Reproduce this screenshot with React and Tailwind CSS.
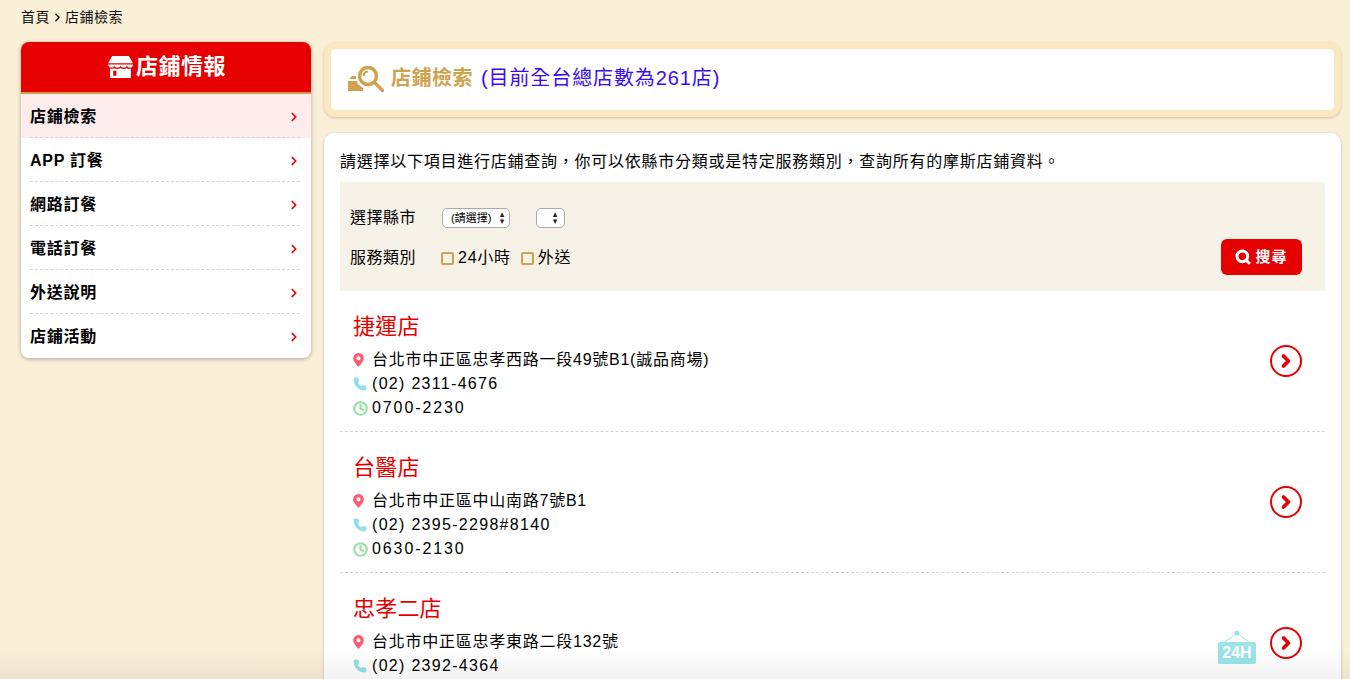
import React from 'react';
import { ChevronRight, Phone, Clock, Search } from 'lucide-react';

const menuItems = ['店鋪檢索', 'APP 訂餐', '網路訂餐', '電話訂餐', '外送說明', '店鋪活動'];

const intro = '請選擇以下項目進行店鋪查詢\uFF0C你可以依縣市分類或是特定服務類別\uFF0C查詢所有的摩斯店鋪資料。';

// third store's hours sit below the fold in the screenshot
const stores = [
  { name: '捷運店', addr: '台北市中正區忠孝西路一段49號B1(誠品商場)', tel: '(02) 2311-4676', time: '0700-2230' },
  { name: '台醫店', addr: '台北市中正區中山南路7號B1', tel: '(02) 2395-2298#8140', time: '0630-2130' },
  { name: '忠孝二店', addr: '台北市中正區忠孝東路二段132號', tel: '(02) 2392-4364', open24: true },
];

// store front icon in the sidebar header
const ShopIcon = () => (
  <svg width="25" height="22" viewBox="0 0 24 21" fill="#fff">
    <path d="M4 0h16l4 7H0z" />
    <path d="M0 8h24c0 2-1 3-2.700 3S18 10 18 9c0 1-1.200 2-3 2s-3-1-3-2c0 1-1.200 2-3 2S6 10 6 9c0 1-1 2-2.500 2S0 10 0 8z" />
    <path fillRule="evenodd" d="M2 12c1 .4 2.500.4 4-.4 1.800 1 3.800 1 6 0 2.200 1 4.200 1 6 0 1.500.8 3 .8 4 .4v9H2zM5 14v5h3v-5z" />
  </svg>
);

// magnifier over a little shop, title of the main panel
const TitleIcon = () => (
  <svg width="36" height="28" viewBox="0 0 36 28" fill="none">
    <circle cx="20" cy="10" r="8.500" stroke="#cfa24f" strokeWidth="3.500" />
    <path d="M26.500 16.500l8 8" stroke="#cfa24f" strokeWidth="3.500" strokeLinecap="round" />
    <path d="M15.500 10a5 5 0 0 1 4.500-4.500" stroke="#cfa24f" strokeWidth="2" />
    <path d="M2 12l2-2h4v3H1zM0 15h9l1 3 5 4v3H0z" fill="#cfa24f" />
  </svg>
);

const PinIcon = () => (
  <svg width="11" height="14" viewBox="0 0 11 14" className="mr-[8px]">
    <path fillRule="evenodd" fill="#ff5a6e" d="M5.500 0a5.300 5.300 0 0 1 5.300 5.300C10.800 8.500 7.500 11.500 5.500 14 3.500 11.500.2 8.500.2 5.300A5.300 5.300 0 0 1 5.500 0zm0 3.200a2.100 2.100 0 1 0 0 4.200 2.100 2.100 0 0 0 0-4.200z" />
  </svg>
);

const Hanging24 = () => (
  <div className="relative flex flex-col items-center w-[38px]">
    <svg width="38" height="12" viewBox="0 0 38 12" fill="none" className="block">
      <circle cx="19" cy="3" r="2.500" fill="#9be3e9" />
      <path d="M19 3L7 12M19 3l12 9" stroke="#9be3e9" strokeWidth="1" />
    </svg>
    <div className="w-[38px] h-[22px] bg-[#9be3e9] rounded-[2px] text-white text-[16px] font-bold leading-[22px] text-center tracking-normal">24H</div>
  </div>
);

const SelectArrows = () => (
  <span className="text-[8px] leading-[7px] flex flex-col text-[#222] scale-x-90"><span>▲</span><span>▼</span></span>
);

const StoreRow = ({ store }) => (
  <div className="flex items-center border-b border-dashed border-[#d5d5d5] pl-[13px] pr-[23px] pt-[21px] pb-[11px]">
    <div className="flex-1">
      <h3 className="text-[22px] leading-[30px] tracking-[0.2px] text-[#e60000] mb-[6px]">{store.name}</h3>
      <div className="flex items-center h-[24px]">
        <PinIcon />
        <span>{store.addr}</span>
      </div>
      <div className="flex items-center h-[24px]">
        <Phone size={14} fill="#8fe0e8" stroke="#8fe0e8" className="mr-[5px]" />
        <span className="tracking-[1.300px]">{store.tel}</span>
      </div>
      <div className="flex items-center h-[24px]">
        {store.time && (
          <>
            <Clock size={15} stroke="#97e3a6" strokeWidth={3.500} className="mr-[4px]" />
            <span className="tracking-[1.900px]">{store.time}</span>
          </>
        )}
      </div>
    </div>
    <div className="flex items-center gap-[14px] -mt-[10px]">
      {store.open24 && <div className="mt-[8px]"><Hanging24 /></div>}
      <div className="w-[32px] h-[32px] rounded-full border-2 border-[#e60000] flex items-center justify-center">
        <ChevronRight size={20} stroke="#e60000" strokeWidth={4.500} />
      </div>
    </div>
  </div>
);

export default function App() {
  return (
    <div className="relative h-[679px] overflow-hidden bg-[#faefd7] text-black font-['Liberation_Sans','Noto_Sans_CJK_TC',sans-serif] px-[21px] pr-[9px]">
      <div className="flex items-center h-[42px] pb-[8px] text-[14px] tracking-[0.5px] text-[#111]">
        首頁
        <ChevronRight size={13} strokeWidth={2.500} className="mx-[1px]" />
        店鋪檢索
      </div>

      <div className="flex items-start gap-[13px]">
        {/* sidebar */}
        <aside className="w-[290px] shrink-0 bg-white rounded-[8px] overflow-hidden shadow-[0_1px_4px_rgba(0,0,0,0.3)]">
          <div className="h-[52px] bg-[#e60000] border-b-2 border-[#d09a4a] flex items-center justify-center gap-[3px] pl-[2px] pb-[1px] text-white text-[22px] font-bold tracking-[0.5px]">
            <ShopIcon />
            店鋪情報
          </div>
          <ul>
            {menuItems.map((label, i) => (
              <li key={label} className={`h-[44px] pl-[9px] pr-[11px] ${i === 0 ? 'bg-[#ffecec]' : ''}`}>
                <div className={`h-full pt-[2px] flex items-center justify-between text-[16px] font-bold tracking-[0.75px] ${i < menuItems.length - 1 ? 'border-b border-dashed border-[#d5d5d5]' : ''}`}>
                  {label}
                  <ChevronRight size={14} stroke="#e60000" strokeWidth={3} className="-mr-[1px]" />
                </div>
              </li>
            ))}
          </ul>
        </aside>

        {/* main */}
        <main className="flex-1">
          <div className="h-[75px] bg-white border-[7px] border-[#fae8c0] rounded-[12px] shadow-[0_1px_3px_rgba(0,0,0,0.2)] flex items-center pl-[17px] text-[20px] font-bold text-[#cfa24f] mb-[16px]">
            <TitleIcon />
            <span className="ml-[7px] -mt-[3px] tracking-[0.5px]">店鋪檢索</span>
            <span className="ml-[8px] -mt-[3px] font-normal text-[#3b0cf5] tracking-[0.9px]">(目前全台總店數為261店)</span>
          </div>

          <div className="bg-white rounded-[10px] shadow-[0_1px_3px_rgba(0,0,0,0.25)] px-[16px] pt-[18px] text-[16px] tracking-[0.75px]">
            <p className="leading-[22px] mb-[9px]">{intro}</p>

            <div className="h-[109px] bg-[#f7f2e7] flex items-end justify-between pl-[10px] pr-[23px] pb-[16px]">
              <div className="pb-[7px]">
                <div className="flex items-center h-[24px] mb-[18px]">
                  <span className="w-[92px] tracking-[0.5px]">選擇縣市</span>
                  <div className="w-[68px] h-[20px] mr-[26px] bg-white border border-[#aaa] rounded-[5px] flex items-center justify-between pl-[8px] pr-[3px] text-[11px] tracking-normal">
                    (請選擇)
                    <SelectArrows />
                  </div>
                  <div className="w-[29px] h-[20px] bg-white border border-[#aaa] rounded-[5px] flex items-center justify-end pr-[4px]">
                    <SelectArrows />
                  </div>
                </div>
                <div className="flex items-center h-[20px]">
                  <span className="w-[91px] tracking-[0.5px]">服務類別</span>
                  <span className="w-[13px] h-[13px] border-2 border-[#cfa24f] rounded-[2px] mr-[4px]" />
                  <span className="mr-[10px]">24小時</span>
                  <span className="w-[13px] h-[13px] border-2 border-[#cfa24f] rounded-[2px] mr-[4px]" />
                  <span>外送</span>
                </div>
              </div>
              <button className="w-[81px] h-[36px] bg-[#e60000] rounded-[6px] text-white text-[15px] font-bold tracking-[1px] flex items-center justify-center gap-[4px]">
                <Search size={16} strokeWidth={4.500} />
                搜尋
              </button>
            </div>

            {stores.map(s => <StoreRow key={s.name} store={s} />)}
          </div>
        </main>
      </div>

      {/* fade along the bottom edge of the window */}
      <div className="absolute left-0 right-0 bottom-0 h-[30px] bg-gradient-to-b from-transparent to-[rgba(0,0,0,0.05)] pointer-events-none" />
    </div>
  );
}
